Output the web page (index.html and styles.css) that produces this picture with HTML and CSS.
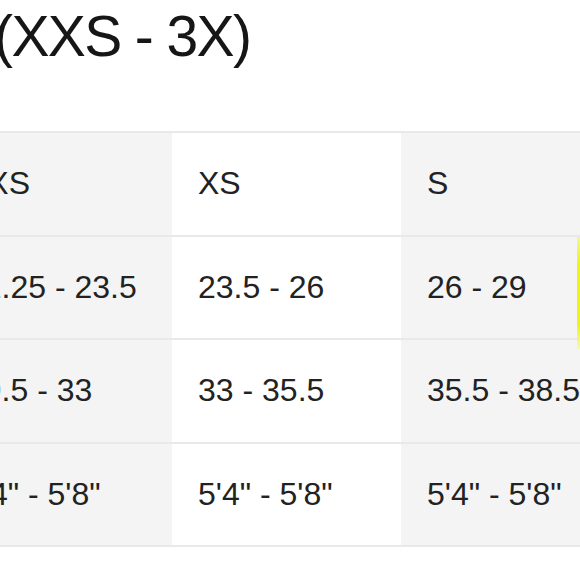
FILE: index.html
```html
<!DOCTYPE html>
<html lang="en">
<head>
<meta charset="utf-8">
<title>Size chart</title>
<link rel="stylesheet" href="styles.css">
</head>
<body>
<div class="page">
  <h1 class="title">(XXS - 3X)</h1>
  <div class="chart">
    <div class="cell">XXS</div>
    <div class="cell">XS</div>
    <div class="cell">S</div>
    <div class="cell">M</div>

    <div class="cell">22.25 - 23.5</div>
    <div class="cell">23.5 - 26</div>
    <div class="cell">26 - 29</div>
    <div class="cell">29 - 32</div>

    <div class="cell">29.5 - 33</div>
    <div class="cell">33 - 35.5</div>
    <div class="cell">35.5 - 38.5</div>
    <div class="cell">38.5 - 41.5</div>

    <div class="cell">5'4" - 5'8"</div>
    <div class="cell">5'4" - 5'8"</div>
    <div class="cell">5'4" - 5'8"</div>
    <div class="cell">5'4" - 5'8"</div>
  </div>
</div>
<div class="marker"></div>
</body>
</html>
```
FILE: styles.css
```css
html, body {
  margin: 0;
  padding: 0;
  background: #ffffff;
}

body {
  font-family: "Liberation Sans", Arial, sans-serif;
  color: #1f1f1f;
  overflow: hidden;
}

.page {
  width: 580px;
  height: 580px;
  overflow: hidden;
}

.title {
  margin: 4px 0 0 -6px;
  font-size: 57px;
  line-height: 65px;
  font-weight: 400;
  letter-spacing: -1.6px;
  color: #161616;
  white-space: nowrap;
}

.chart {
  display: grid;
  grid-template-columns: 232px 229px 230px 230px;
  width: 921px;
  margin: 62px 0 0 -60px;
  border-bottom: 2px solid #e9e9e9;
}

.cell {
  box-sizing: border-box;
  height: 103.5px;
  border-top: 2px solid #e9e9e9;
  display: flex;
  align-items: center;
  padding-left: 26px;
  font-size: 32px;
  white-space: nowrap;
  color: #222222;
  background: #ffffff;
}

.cell:nth-child(4n+1),
.cell:nth-child(4n+3) {
  background: #f4f4f4;
}

.marker {
  position: absolute;
  left: 577px;
  top: 237px;
  width: 3px;
  height: 112px;
  background: linear-gradient(to bottom, #f3f59a 0%, #eef31a 25%, #eef31a 78%, #f6f8b8 100%);
}
```
